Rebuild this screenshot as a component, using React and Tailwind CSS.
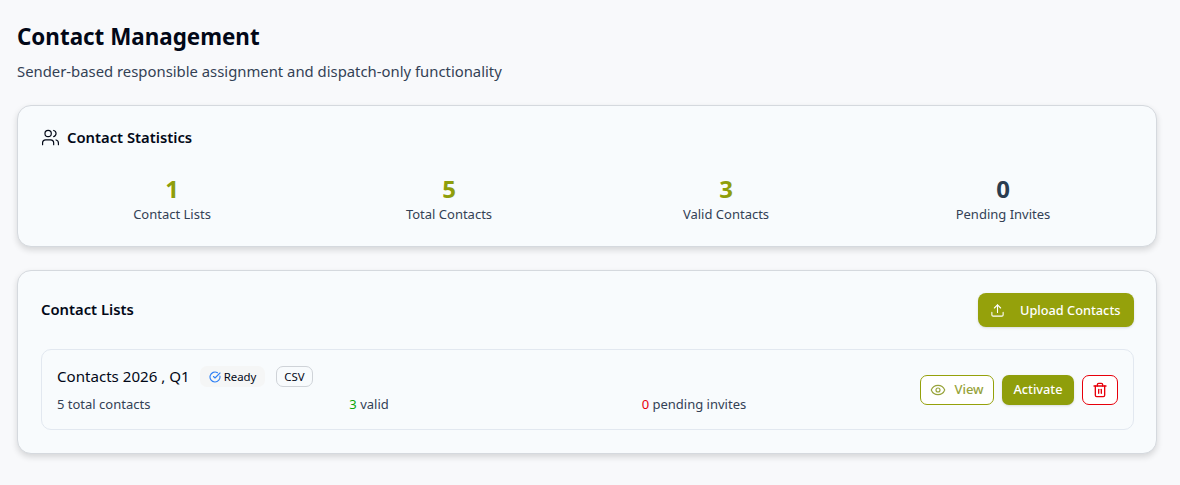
import React from 'react';
import { Users, Upload, Eye, Trash2, CircleCheckBig } from 'lucide-react';

const stats = [
  { value: '1', label: 'Contact Lists', color: 'text-[#8f9e0b]' },
  { value: '5', label: 'Total Contacts', color: 'text-[#8f9e0b]' },
  { value: '3', label: 'Valid Contacts', color: 'text-[#8f9e0b]' },
  { value: '0', label: 'Pending Invites', color: 'text-[#2b3d4f]' },
];

const App = () => {
  return (
    <div className="min-h-[485px] bg-[#f8f9fb] pl-[17px] pr-[23px] pt-[21px] text-[#0f172a] font-['Noto_Sans',sans-serif]">
      <h1 className="text-[22.4px] leading-[32px] font-bold text-[#020817]">Contact Management</h1>
      <p className="mt-[6px] text-[14.85px] leading-[24px] text-[#334155]">Sender-based responsible assignment and dispatch-only functionality</p>

      {/* Statistics */}
      <section className="mt-[22px] h-[142px] rounded-[14px] border border-[#d5d9de] bg-[#f8fbfd] pl-[23px] pr-[22px] pt-[19px] shadow-[0_3px_6px_rgba(0,0,0,0.14)]">
        <div className="flex items-center gap-[6px]">
          <Users size={19} strokeWidth={1.5} className="text-[#020817]" />
          <h2 className="ml-[1px] text-[14.8px] leading-[24px] font-semibold text-[#020817]">Contact Statistics</h2>
        </div>
        <div className="mt-[26px] grid grid-cols-4 gap-x-[15px]">
          {stats.map((s) => (
            <div key={s.label} className="flex flex-col items-center">
              <div className={`text-[24px] leading-[28px] font-bold ${s.color}`}>{s.value}</div>
              <div className="mt-[1px] text-[13px] leading-[20px] text-[#334155]">{s.label}</div>
            </div>
          ))}
        </div>
      </section>

      {/* Contact lists */}
      <section className="mt-[23px] h-[184px] rounded-[14px] border border-[#d5d9de] bg-[#f8fbfd] pl-[23px] pr-[22px] pt-[22px] shadow-[0_3px_6px_rgba(0,0,0,0.14)]">
        <div className="flex items-center justify-between">
          <h2 className="-mt-[2px] text-[14.8px] leading-[24px] font-semibold text-[#020817]">Contact Lists</h2>
          <button className="flex h-[34px] w-[156px] items-center rounded-[8px] bg-[#95a10b] pl-[12px] text-[12.75px] font-medium text-white shadow-sm">
            <Upload size={15} strokeWidth={1.75} />
            <span className="ml-[15px] mt-[1px] whitespace-nowrap">Upload Contacts</span>
          </button>
        </div>

        <div className="mt-[22px] flex h-[81px] items-center justify-between rounded-[10px] border border-[#e2e8f0] pl-[15px] pr-[15px]">
          <div className="w-[700px]">
            <div className="flex items-center">
              <span className="text-[15.1px] leading-[20px] text-[#020817]">Contacts 2026 , Q1</span>
              <span className="ml-[10px] mt-[1px] flex h-[21px] items-center gap-[3px] rounded-[7px] bg-[#f5f6f6] px-[9px] text-[11.4px] text-[#020817]">
                <CircleCheckBig size={12} strokeWidth={2.25} className="text-[#2f80f5]" />
                Ready
              </span>
              <span className="ml-[11px] mt-[1px] flex h-[21px] items-center rounded-[7px] border border-[#cfd3d8] px-[7px] text-[11.4px] text-[#020817]">CSV</span>
            </div>
            <div className="mt-[7px] grid grid-cols-3 text-[13px] leading-[20px] text-[#334155]">
              <span>5 total contacts</span>
              <span className="pl-[59px]"><span className="text-[#0aa60a]">3</span> valid</span>
              <span className="pl-[118px] whitespace-nowrap"><span className="text-[#e7000b]">0</span> pending invites</span>
            </div>
          </div>
          <div className="flex items-center gap-[8px]">
            <button className="flex h-[30px] w-[74px] items-center justify-center gap-[8px] rounded-[7px] border border-[#95a10b] bg-white text-[13px] font-medium text-[#97a33a]">
              <Eye size={16} strokeWidth={1.75} />
              View
            </button>
            <button className="h-[30px] w-[72px] rounded-[7px] bg-[#8f9e0b] text-[12.75px] font-medium text-white shadow-sm">Activate</button>
            <button className="flex h-[30px] w-[36px] items-center justify-center rounded-[7px] border border-[#e7000b] bg-white text-[#e7000b]">
              <Trash2 size={16} strokeWidth={2} />
            </button>
          </div>
        </div>
      </section>
    </div>
  );
};

export default App;
